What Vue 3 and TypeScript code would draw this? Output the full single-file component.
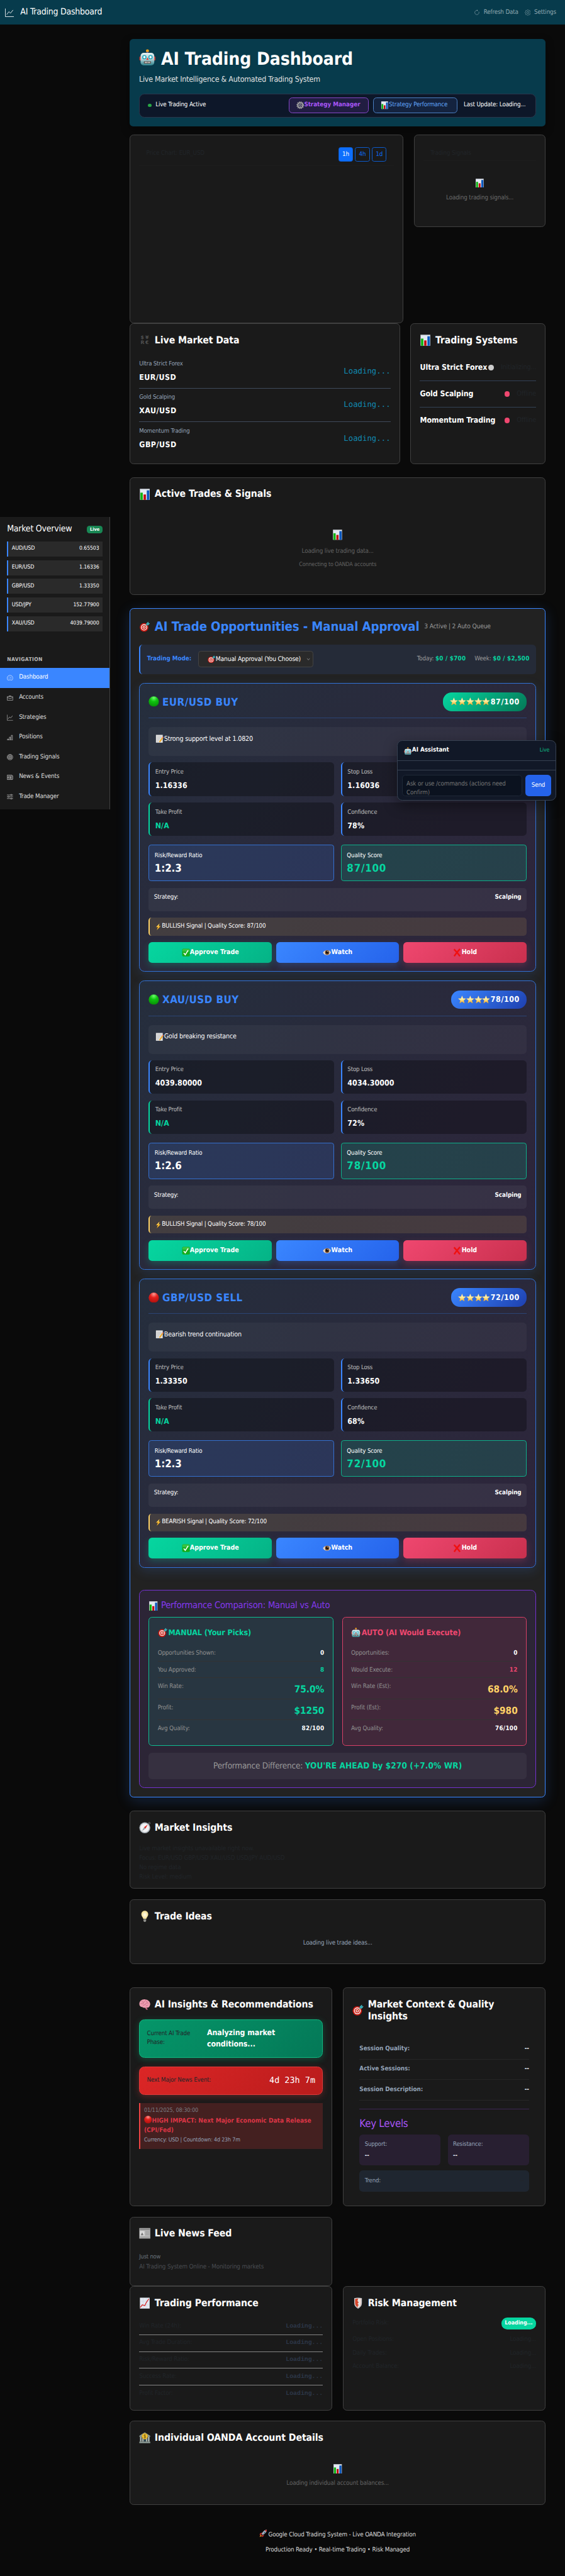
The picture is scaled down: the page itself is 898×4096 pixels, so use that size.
<script setup lang="ts">
import { h } from 'vue'

const Icon = (p: { n: string }) =>
  h('svg', { viewBox: '0 0 24 24' }, [h('use', { href: '#e-' + p.n })])

const quotes = [
  ['AUD/USD', '0.65503'],
  ['EUR/USD', '1.16336'],
  ['GBP/USD', '1.33350'],
  ['USD/JPY', '152.77900'],
  ['XAU/USD', '4039.79000'],
]

const nav = [
  ['speed', 'Dashboard'],
  ['case', 'Accounts'],
  ['graph', 'Strategies'],
  ['barchart', 'Positions'],
  ['rings', 'Trading Signals'],
  ['paper', 'News & Events'],
  ['sliders', 'Trade Manager'],
]

const markets = [
  ['Ultra Strict Forex', 'EUR/USD'],
  ['Gold Scalping', 'XAU/USD'],
  ['Momentum Trading', 'GBP/USD'],
]

const systems = [
  { name: 'Ultra Strict Forex', state: 'Initializing...', on: true },
  { name: 'Gold Scalping', state: 'Offline', on: false },
  { name: 'Momentum Trading', state: 'Offline', on: false },
]

interface Trade {
  title: string
  ball: string
  stars: number
  score: number
  top: boolean
  note: string
  entry: string
  stop: string
  confidence: string
  ratio: string
  bias: string
}

const trades: Trade[] = [
  { title: 'EUR/USD BUY', ball: 'green', stars: 5, score: 87, top: true, note: 'Strong support level at 1.0820', entry: '1.16336', stop: '1.16036', confidence: '78%', ratio: '1:2.3', bias: 'BULLISH' },
  { title: 'XAU/USD BUY', ball: 'green', stars: 4, score: 78, top: false, note: 'Gold breaking resistance', entry: '4039.80000', stop: '4034.30000', confidence: '72%', ratio: '1:2.6', bias: 'BULLISH' },
  { title: 'GBP/USD SELL', ball: 'red', stars: 4, score: 72, top: false, note: 'Bearish trend continuation', entry: '1.33350', stop: '1.33650', confidence: '68%', ratio: '1:2.3', bias: 'BEARISH' },
]

const compare = [
  {
    kind: 'manual', icon: 'target', title: 'MANUAL (Your Picks)',
    rows: [
      ['Opportunities Shown:', '0', ''],
      ['You Approved:', '8', 'good'],
      ['Win Rate:', '75.0%', 'good big'],
      ['Profit:', '$1250', 'good big'],
      ['Avg Quality:', '82/100', ''],
    ],
  },
  {
    kind: 'auto', icon: 'robot', title: 'AUTO (AI Would Execute)',
    rows: [
      ['Opportunities:', '0', ''],
      ['Would Execute:', '12', 'bad'],
      ['Win Rate (Est):', '68.0%', 'warn big'],
      ['Profit (Est):', '$980', 'warn big'],
      ['Avg Quality:', '76/100', ''],
    ],
  },
]

const sessions = ['Session Quality:', 'Active Sessions:', 'Session Description:']
const performance = ['Win Rate (24h):', 'Avg Trade Duration:', 'Risk/Reward Ratio:', 'Success Rate:', 'Profit Factor:']
const risks = ['Open Positions:', 'Daily Trades:', 'Account Balance:']
</script>

<template>
  <div class="app">
    <svg class="defs" width="0" height="0">
      <defs>
        <linearGradient id="g-teal" x1="0" y1="0" x2="0" y2="1"><stop offset="0" stop-color="#e4f1f2" /><stop offset=".55" stop-color="#a9ced3" /><stop offset="1" stop-color="#2c7f89" /></linearGradient>
        <linearGradient id="g-star" x1="0" y1="0" x2="0" y2="1"><stop offset="0" stop-color="#fffbe0" /><stop offset=".5" stop-color="#ffeb95" /><stop offset="1" stop-color="#f5a51d" /></linearGradient>
        <radialGradient id="g-green" cx=".5" cy=".15" r=".9"><stop offset="0" stop-color="#6dff6d" /><stop offset=".4" stop-color="#0fc40f" /><stop offset="1" stop-color="#068a06" /></radialGradient>
        <radialGradient id="g-red" cx=".5" cy=".15" r=".9"><stop offset="0" stop-color="#ff9a94" /><stop offset=".4" stop-color="#e5201c" /><stop offset="1" stop-color="#a50f0d" /></radialGradient>
        <radialGradient id="g-bulb" cx=".5" cy=".5" r=".6"><stop offset="0" stop-color="#fffef0" /><stop offset="1" stop-color="#eed37a" /></radialGradient>
      </defs>
      <symbol id="e-robot" viewBox="0 0 24 24">
        <circle cx="12" cy="2.6" r="2.2" fill="#f6a21c" /><rect x="11" y="4" width="2" height="3" fill="#7a4f9c" />
        <rect x=".6" y="10.5" width="3" height="6" rx="1.2" fill="#d8392f" /><rect x="20.4" y="10.5" width="3" height="6" rx="1.2" fill="#d8392f" />
        <rect x="2.2" y="5.4" width="19.6" height="18" rx="4.5" fill="url(#g-teal)" />
        <circle cx="7.6" cy="11.6" r="3.1" fill="#2aa7bd" /><circle cx="16.4" cy="11.6" r="3.1" fill="#2aa7bd" />
        <circle cx="7.6" cy="11.6" r="1.6" fill="#fff" /><circle cx="16.4" cy="11.6" r="1.6" fill="#fff" />
        <path d="M12 12l1.8 3.6h-3.6z" fill="#e03c31" /><rect x="7" y="17.6" width="10" height="3" rx=".6" fill="#4a3b35" />
        <path d="M8.2 18.2h1.4v1.8H8.2zm2.2 0h1.3v1.8h-1.3zm2.1 0h1.3v1.8h-1.3zm2.1 0h1.3v1.8h-1.3z" fill="#fff" />
      </symbol>
      <symbol id="e-bars" viewBox="0 0 24 24">
        <rect x="1.8" y=".6" width="20.4" height="22.8" fill="#e3e9f2" /><rect x="1.8" y=".6" width="20.4" height="1.2" fill="#c3c8d2" />
        <rect x="2.8" y="8.4" width="5" height="15" fill="#0fb512" /><rect x="9.4" y="12.2" width="5" height="11.2" fill="#c20d12" /><rect x="16.2" y="3.6" width="5.2" height="19.8" fill="#0b58bf" />
      </symbol>
      <symbol id="e-gear" viewBox="0 0 24 24">
        <circle cx="12" cy="12" r="10" fill="none" stroke="#9a9a9a" stroke-width="3" stroke-dasharray="2.8 2.43" />
        <circle cx="12" cy="12" r="7.6" fill="none" stroke="#a8a8a8" stroke-width="3.4" />
        <circle cx="12" cy="12" r="3" fill="none" stroke="#c4c4c4" stroke-width="1.8" />
        <path d="M12 4v5M12 15v5M4 12h5M15 12h5" stroke="#8d8d8d" stroke-width="1.4" />
      </symbol>
      <symbol id="e-target" viewBox="0 0 24 24">
        <circle cx="10.4" cy="13.6" r="9.8" fill="#c9170f" /><circle cx="10.4" cy="13.6" r="7.2" fill="#f4e9e7" /><circle cx="10.4" cy="13.6" r="5.2" fill="#d42018" /><circle cx="10.4" cy="13.6" r="3.3" fill="#f4e9e7" /><circle cx="10.4" cy="13.6" r="1.6" fill="#c9170f" />
        <path d="M10.4 13.6L17 7" stroke="#b98252" stroke-width="1.2" /><path d="M14.8 9l.8-4.4L20 .6l.6 3.2 3 .7-4 4.3z" fill="#3fb4bd" /><path d="M15 9l6-6" stroke="#1f7f8b" stroke-width="1" />
      </symbol>
      <symbol id="e-memo" viewBox="0 0 24 24">
        <rect x="1.5" y=".8" width="19.5" height="22.4" fill="#e3e3e3" /><path d="M4 5.5h14M4 9h14M4 12.5h10M4 16h7M4 19.500h5" stroke="#a9a9a9" stroke-width="1" />
        <path d="M21 6l2.6 2-9 12.600-3.600 1.800.7-4z" fill="#f2a71e" /><path d="M21 6l2.600 2-1.700 2.400-2.600-2z" fill="#e0707c" />
      </symbol>
      <symbol id="e-star" viewBox="0 0 24 24"><path d="M12 .6l3.200 7.900 8.400.6-6.500 5.400 2.100 8.300L12 18.200l-7.200 4.600 2.100-8.300L.4 9.100l8.400-.6z" fill="url(#g-star)" stroke="#eab04a" stroke-width=".5" /></symbol>
      <symbol id="e-bolt" viewBox="0 0 24 24"><path d="M16.500.5L4 13.200l6.600-.4L7 23.500 20 9.600l-6.800.5z" fill="#fdb827" /><path d="M15 2.500L7.500 11l5-1z" fill="#ffe27a" /></symbol>
      <symbol id="e-check" viewBox="0 0 24 24"><rect x="1" y="1" width="22" height="22" rx="3.500" fill="#15ad1b" /><rect x="2" y="1.500" width="20" height="8" rx="3" fill="#54d25a" opacity=".6" /><path d="M5.500 13l4.300 5.500L18 5.500" fill="none" stroke="#fff" stroke-width="2.800" /></symbol>
      <symbol id="e-eye" viewBox="0 0 24 24"><path d="M1 12C4 4.500 20 2.500 23 11.500c-1.500 9-18.500 10.500-22 .5z" fill="#eee8df" stroke="#c7a086" stroke-width="1" /><circle cx="12.500" cy="11.500" r="6.300" fill="#6d4425" /><circle cx="12.500" cy="11.500" r="3.200" fill="#0c0806" /><circle cx="14.500" cy="9" r="1.300" fill="#fff" /></symbol>
      <symbol id="e-cross" viewBox="0 0 24 24"><path d="M3 2.500c5 5 11 12 17 20M20 1.500C14 8 8 15 3.500 22.500" stroke="#f01010" stroke-width="4.400" fill="none" /></symbol>
      <symbol id="e-green" viewBox="0 0 24 24"><circle cx="12" cy="12" r="11.600" fill="url(#g-green)" /></symbol>
      <symbol id="e-red" viewBox="0 0 24 24"><circle cx="12" cy="12" r="11.600" fill="url(#g-red)" /></symbol>
      <symbol id="e-compass" viewBox="0 0 24 24"><circle cx="21.500" cy="2.800" r="1.800" fill="none" stroke="#8c9399" stroke-width="1" /><circle cx="12" cy="12.200" r="11.400" fill="#a9b2b9" /><circle cx="12" cy="12.200" r="9.300" fill="#f3f3f5" stroke="#d3d7da" stroke-width="1.200" /><path d="M18 5.500l-4.400 8.200-3.200-2.500z" fill="#e0241f" /><path d="M6 19l4.400-7.800 3.200 2.500z" fill="#9aa2a8" /></symbol>
      <symbol id="e-bulb" viewBox="0 0 24 24"><path d="M12 .4c-4.500 0-7.200 3.300-7.200 7.400 0 4.200 3.300 5.700 4 9.400h6.400c.7-3.700 4-5.200 4-9.400 0-4.100-2.700-7.400-7.200-7.400z" fill="url(#g-bulb)" /><path d="M9.200 17.800h5.600v3.400c0 1.500-1 2.400-2.800 2.400s-2.800-.9-2.800-2.400z" fill="#9d9d98" /><path d="M9.200 19.300h5.600M9.200 21h5.600" stroke="#6f6f6b" stroke-width=".6" /></symbol>
      <symbol id="e-brain" viewBox="0 0 24 24"><path d="M15 17.500l3.500 5.500h-3.500l-3-5z" fill="#c76a85" /><path d="M12.500 1.500C6 1 .8 5 .6 10.800c-.2 4.700 3 7 6 6.700 2 1.800 5 2.200 7.400.8 3 1.200 7.200.4 8.200-2.800C26 8.500 19.500 1.500 12.500 1.500z" fill="#ee9db1" /><path d="M3 11c2-2 4 1 6-1s0-4 3-5M8 15c2-3 5-1 6-4s4-2 6-1M14 16c1-2 3-1 5-3M14 3c-1 3 3 3 4 5M6 5c0 2 2 2 3 3" fill="none" stroke="#c0657f" stroke-width="1.100" /></symbol>
      <symbol id="e-news" viewBox="0 0 24 24"><rect x=".6" y="1" width="22.800" height="22" fill="#bdbdbd" /><rect x="1.600" y="2" width="20.800" height="3.600" fill="#8d8d8d" /><rect x="2" y="7.500" width="9" height="10" fill="#dcdcdc" /><path d="M3.500 16l3-6 3 6z" fill="#777" /><path d="M13 8h9M13 10.500h9M13 13h9M13 15.500h9M2 19.500h20M2 21.500h20" stroke="#858585" stroke-width=".9" /></symbol>
      <symbol id="e-up" viewBox="0 0 24 24"><rect x="1.800" y=".6" width="20.400" height="22.800" fill="#e3e9f2" /><path d="M2 8h20M2 15.500h20M8.500 1v22M15.500 1v22" stroke="#c8d1de" stroke-width=".6" /><path d="M2.500 21l4.500-5.500 5 2L15 11l5.500-8" fill="none" stroke="#d81e1e" stroke-width="1.600" /></symbol>
      <symbol id="e-shield" viewBox="0 0 24 24"><path d="M4 1.800Q12-.6 20 1.800V12q0 7.500-8 11.600Q4 19.500 4 12z" fill="#c9cdd0" /><path d="M5.800 3.300Q12 1.600 18.200 3.300V12q0 6-6.200 9.500Q5.800 18 5.800 12z" fill="#d6452b" /><path d="M12 2.400q3 0 6.200.9V12q0 6-6.200 9.500l-1.200-3 2.600-2.500-2.600-3 2.600-2.500-2.600-3z" fill="#e9e4e1" /></symbol>
      <symbol id="e-bank" viewBox="0 0 24 24"><path d="M12 .6L23.300 8v2.200H.7V8z" fill="#8d9c96" /><path d="M2 10.200h3.400v10H2zm4.600 0H10v10H6.600zm7.400 0h3.400v10H14zm4.600 0H22v10h-3.400z" fill="#a9b5b0" /><rect x="10" y="12" width="4" height="8.200" fill="#2b4550" /><rect x=".6" y="20.200" width="22.800" height="3.200" fill="#8d9c96" /><circle cx="12" cy="9" r="6" fill="#f1c232" stroke="#b98d14" stroke-width=".8" /><path d="M14.200 7C13.500 5.600 10 5.800 10 7.500s4.200 1.100 4.200 3-3.600 2.100-4.400.5M12 4.800v8.600" fill="none" stroke="#6e5410" stroke-width="1.100" /></symbol>
      <symbol id="e-rocket" viewBox="0 0 24 24"><path d="M4.500 15.500L1 23l7.500-3.500z" fill="#f7941d" /><path d="M8 9l-5.500 3L1 17l6-2zM15 16l-3 5.500-5 1.500 2-6z" fill="#c22b2b" /><path d="M23 1c-6 0-11 3.500-15.500 12.500l3 3C19.500 12 23 7 23 1z" fill="#b7bfc9" /><path d="M23 1c0 6-3.500 11-12.500 15.500l-1.200-1.200C16 11 20 7 23 1z" fill="#7c8793" /><path d="M23 1c-2.500 0-4.600.6-6.500 1.600l4.900 4.900C22.400 5.600 23 3.500 23 1z" fill="#c22b2b" /><circle cx="15.500" cy="8.500" r="2" fill="#2b5d86" /></symbol>
      <symbol id="e-speed" viewBox="0 0 24 24"><path d="M4 20.500a11 11 0 1 1 16 0q-8-2-16 0zM12 6.500v2M5.500 13h2M16.500 13h2M7.300 8.300l1.300 1.300M11 14.500l5.500-5.500" class="ln" /></symbol>
      <symbol id="e-case" viewBox="0 0 24 24"><path d="M1 6.500h22v14H1zM8.500 6.300V3.500h7v2.800M1 10.500l11 3.500 11-3.500" class="ln" /></symbol>
      <symbol id="e-graph" viewBox="0 0 24 24"><path d="M.8 1v22H24M4.500 17.500l6-8 4.200 4.200L21.800 5" class="ln" /></symbol>
      <symbol id="e-barchart" viewBox="0 0 24 24"><path d="M2 17.500h4V22H2zM9.500 10h4v12h-4zM17 3h4.500v19H17z" class="ln" /></symbol>
      <symbol id="e-rings" viewBox="0 0 24 24"><circle cx="12" cy="12" r="11" class="ln" /><circle cx="12" cy="12" r="7.800" class="ln" /><circle cx="12" cy="12" r="4.600" class="ln" /><circle cx="12" cy="12" r="1.200" class="ln" /></symbol>
      <symbol id="e-paper" viewBox="0 0 24 24"><path d="M1 3.500h18.500v17.500H1zM19.500 6.500H23V19.500q0 1.500-3.500 1.500M3.800 7.500h13M3.800 11h5.500v3H3.800zM11.500 11h5.300M11.500 14h5.300M3.800 17.500h13M14 9v9" class="ln" /></symbol>
      <symbol id="e-sliders" viewBox="0 0 24 24"><path d="M0 5h14.500M19.500 5H24M0 12h4M9 12h15M0 19h14.500M19.500 19H24" class="ln" /><circle cx="17" cy="5" r="2.500" class="ln" /><circle cx="6.500" cy="12" r="2.500" class="ln" /><circle cx="17" cy="19" r="2.500" class="ln" /></symbol>
      <symbol id="e-refresh" viewBox="0 0 24 24"><path d="M12 3.800a8.200 8.200 0 1 0 7.500 4.700" class="ln" /><path d="M12 .6v6.400l4-3.200z" fill="currentColor" /></symbol>
      <symbol id="e-cog" viewBox="0 0 24 24"><g transform="scale(1.5)"><circle cx="8" cy="8" r="2.700" class="ln thin" /><path class="ln thin" d="M9.300 1.600c-.4-1.300-2.200-1.300-2.600 0l-.1.300a1.400 1.400 0 0 1-2 .8l-.3-.1c-1.200-.7-2.500.6-1.800 1.800l.1.300a1.400 1.400 0 0 1-.8 2l-.3.100c-1.300.4-1.300 2.200 0 2.600l.3.100a1.400 1.400 0 0 1 .8 2l-.1.300c-.7 1.200.6 2.500 1.800 1.800l.3-.1a1.400 1.400 0 0 1 2 .8l.1.300c.4 1.300 2.200 1.300 2.600 0l.1-.3a1.400 1.400 0 0 1 2-.8l.3.100c1.200.7 2.500-.6 1.800-1.800l-.1-.3a1.400 1.400 0 0 1 .8-2l.3-.1c1.300-.4 1.300-2.200 0-2.600l-.3-.1a1.400 1.400 0 0 1-.8-2l.1-.3c.7-1.200-.6-2.500-1.800-1.800l-.3.100a1.400 1.400 0 0 1-2-.8z" /></g></symbol>
      <symbol id="e-caret" viewBox="0 0 24 24"><path d="M4 7l8 10 8-10" class="ln" /></symbol>
    </svg>

    <header class="navbar">
      <div class="brand"><Icon n="graph" class="brand-ic" /><span>AI Trading Dashboard</span></div>
      <div class="actions">
        <Icon n="refresh" class="s14" /><span class="a-refresh">Refresh Data</span>
        <Icon n="cog" class="s14" /><span class="a-settings">Settings</span>
      </div>
    </header>

    <div class="body">
      <aside class="sidebar">
        <div class="ov"><h6>Market Overview</h6><span class="live">Live</span></div>
        <div v-for="q in quotes" :key="q[0]" class="quote"><span>{{ q[0] }}</span><b>{{ q[1] }}</b></div>
        <div class="nav-title">NAVIGATION</div>
        <div v-for="(n, i) in nav" :key="n[1]" class="nav-item" :class="{ active: i === 0 }"><Icon :n="n[0]" class="s14" /><span>{{ n[1] }}</span></div>
      </aside>

      <main>
        <section class="hero">
          <h1><Icon n="robot" class="h1-ic" /><span>AI Trading Dashboard</span></h1>
          <p>Live Market Intelligence &amp; Automated Trading System</p>
          <div class="status">
            <i class="dot" /><span class="st-live">Live Trading Active</span>
            <span class="pill purple"><Icon n="gear" class="s18" /><b>Strategy Manager</b></span>
            <span class="pill blue"><Icon n="bars" class="s18" /><span>Strategy Performance</span></span>
            <span class="upd">Last Update: Loading...</span>
          </div>
        </section>

        <div class="row chart-row">
          <section class="card chart">
            <div class="dim-head"><span class="dim">Price Chart: EUR_USD</span>
              <div class="tf"><span class="on">1h</span><span>4h</span><span>1d</span></div>
            </div>
          </section>
          <section class="card signals">
            <div class="dim-head small"><span class="dim">Trading Signals</span></div>
            <Icon n="bars" class="s22" /><span class="muted">Loading trading signals...</span>
          </section>
        </div>

        <div class="row">
          <section class="card market">
            <h2><i class="fx"><b>$</b><b>¥</b><b>R</b><b>€</b></i>Live Market Data</h2>
            <div v-for="m in markets" :key="m[1]" class="m-row">
              <div><span class="m-lab">{{ m[0] }}</span><b class="m-val">{{ m[1] }}</b></div>
              <span class="m-load">Loading...</span>
            </div>
          </section>
          <section class="card systems">
            <h2><Icon n="bars" />Trading Systems</h2>
            <div v-for="s in systems" :key="s.name" class="s-row">
              <b>{{ s.name }}</b><span><i :class="{ on: s.on }" /><em>{{ s.state }}</em></span>
            </div>
          </section>
        </div>

        <section class="card trades">
          <h2><Icon n="bars" />Active Trades &amp; Signals</h2>
          <div class="center"><Icon n="bars" class="s24" /><span>Loading live trading data...</span><small>Connecting to OANDA accounts</small></div>
        </section>

        <section class="opps">
          <div class="opp-head"><Icon n="target" /><b>AI Trade Opportunities - Manual Approval</b><span>3 Active | 2 Auto Queue</span></div>
          <div class="mode">
            <b class="mode-lab">Trading Mode:</b>
            <div class="select"><Icon n="target" class="s18" /><span>Manual Approval (You Choose)</span><Icon n="caret" class="caret" /></div>
            <span class="limits">Today: <b>$0 / $700</b></span><span class="limits last">Week: <b>$0 / $2,500</b></span>
          </div>

          <article v-for="t in trades" :key="t.title" class="trade">
            <div class="t-head">
              <Icon :n="t.ball" class="s24" /><h3>{{ t.title }}</h3>
              <span class="badge" :class="{ top: t.top }"><Icon v-for="s in t.stars" :key="s" n="star" class="star" /><b>{{ t.score }}/100</b></span>
            </div>
            <div class="note"><Icon n="memo" class="s19" /><span>{{ t.note }}</span></div>
            <div class="metrics">
              <div><span>Entry Price</span><b>{{ t.entry }}</b></div>
              <div><span>Stop Loss</span><b>{{ t.stop }}</b></div>
              <div class="tp"><span>Take Profit</span><b>N/A</b></div>
              <div><span>Confidence</span><b>{{ t.confidence }}</b></div>
            </div>
            <div class="scores">
              <div><span>Risk/Reward Ratio</span><b>{{ t.ratio }}</b></div>
              <div class="q"><span>Quality Score</span><b>{{ t.score }}/100</b></div>
            </div>
            <div class="strategy"><span>Strategy:</span><b>Scalping</b></div>
            <div class="signal"><Icon n="bolt" class="s16" /><span>{{ t.bias }} Signal | Quality Score: {{ t.score }}/100</span></div>
            <div class="btns">
              <span class="ok"><Icon n="check" class="s19" /><b>Approve Trade</b></span>
              <span class="watch"><Icon n="eye" class="s19" /><b>Watch</b></span>
              <span class="hold"><Icon n="cross" class="s19" /><b>Hold</b></span>
            </div>
          </article>

          <div class="perf">
            <h4><Icon n="bars" class="s22" />Performance Comparison: Manual vs Auto</h4>
            <div class="cmp">
              <div v-for="c in compare" :key="c.kind" :class="c.kind">
                <h5><Icon :n="c.icon" class="s22" />{{ c.title }}</h5>
                <div v-for="r in c.rows" :key="r[0]" class="c-row" :class="r[2]"><span>{{ r[0] }}</span><b>{{ r[1] }}</b></div>
              </div>
            </div>
            <div class="diff"><span>Performance Difference: </span><b>YOU'RE AHEAD by $270 (+7.0% WR)</b></div>
          </div>
        </section>

        <section class="card insights">
          <h2><Icon n="compass" />Market Insights</h2>
          <p class="dim">Live market insights unavailable right now.</p>
          <p class="dim">Focus: EUR/USD GBP/USD XAU/USD USD/JPY AUD/USD</p>
          <p class="dim">No regime data</p>
          <p class="dim">Risk Level: medium</p>
        </section>

        <section class="card ideas"><h2><Icon n="bulb" />Trade Ideas</h2><p>Loading live trade ideas...</p></section>

        <div class="row halves ai-row">
          <section class="card ai">
            <h2><Icon n="brain" />AI Insights &amp; Recommendations</h2>
            <div class="phase"><span>Current AI Trade Phase:</span><b>Analyzing market conditions...</b></div>
            <div class="next"><span>Next Major News Event:</span><b>4d 23h 7m</b></div>
            <div class="event">
              <small>01/11/2025, 08:30:00</small>
              <b><Icon n="red" class="s18" />HIGH IMPACT: Next Major Economic Data Release<br>(CPI/Fed)</b>
              <span>Currency: USD | Countdown: 4d 23h 7m</span>
            </div>
          </section>
          <section class="card ctx">
            <h2 class="two"><Icon n="target" /><span>Market Context &amp; Quality<br>Insights</span></h2>
            <div class="ctx-in">
              <div v-for="s in sessions" :key="s" class="x-row"><b>{{ s }}</b><b class="w">--</b></div>
              <h4>Key Levels</h4>
              <div class="lv"><div><span>Support:</span><b>--</b></div><div><span>Resistance:</span><b>--</b></div></div>
              <div class="trend"><span>Trend:</span><em>--</em></div>
            </div>
          </section>
        </div>

        <section class="card feed"><h2><Icon n="news" />Live News Feed</h2><small>Just now</small><p>AI Trading System Online - Monitoring markets</p></section>

        <div class="row halves">
          <section class="card stats">
            <h2><Icon n="up" />Trading Performance</h2>
            <div v-for="p in performance" :key="p" class="p-row"><span>{{ p }}</span><b>Loading...</b></div>
          </section>
          <section class="card risk">
            <h2><Icon n="shield" />Risk Management</h2>
            <div class="r-row first"><span>Portfolio Risk:</span><b>Loading...</b></div>
            <div v-for="r in risks" :key="r" class="r-row"><span>{{ r }}</span><span>Loading...</span></div>
          </section>
        </div>

        <section class="card accounts">
          <h2><Icon n="bank" />Individual OANDA Account Details</h2>
          <div class="center"><Icon n="bars" class="s22" /><span>Loading individual account balances...</span></div>
        </section>

        <footer>
          <p><Icon n="rocket" class="s18" />Google Cloud Trading System - Live OANDA Integration</p>
          <p>Production Ready • Real-time Trading • Risk Managed</p>
        </footer>
      </main>
    </div>

    <div class="assistant">
      <div class="as-head"><Icon n="robot" class="s18" /><b>AI Assistant</b><span>Live</span></div>
      <div class="as-log" />
      <div class="as-form"><div class="as-in">Ask or use /commands (actions need Confirm)</div><span class="send">Send</span></div>
    </div>
  </div>
</template>

<style>
body { background: #0a0a0a; }
.ln { fill: none; stroke: currentColor; stroke-width: 1.5; }
.ln.thin { stroke-width: 1; }
</style>

<style scoped>
.app { --ls: -.017; zoom: 0.7015625; position: relative; width: 1280px; height: 5838px; overflow: hidden; background: #0a0a0a; color: #fff; font-family: "DejaVu Sans Condensed", "DejaVu Sans", sans-serif; font-stretch: condensed; font-size: 14px; line-height: 21px; text-rendering: geometricPrecision; }
.app * { box-sizing: border-box; letter-spacing: calc(var(--ls) * 1em); }
.app svg { flex: none; }
h1, h2, h3, h5, b { --ls: -.005; }
h1, h2, h3, h4, h5, h6, p { margin: 0; }
.defs { position: absolute; }
span, b { white-space: nowrap; }
.s14 { width: 14px; height: 14px; }
.s16 { width: 16px; height: 16px; }
.s18 { width: 18px; height: 18px; }
.s19 { width: 19px; height: 19px; }
.s22 { width: 22px; height: 22px; }
.s24 { width: 24px; height: 24px; }
.dim { color: #212529; }

.navbar { height: 56px; background: #073b4c; display: flex; justify-content: space-between; align-items: center; padding: 0 20px 0 12px; }
.brand { display: flex; align-items: center; gap: 14px; font-size: 20px; }
.brand-ic { width: 20px; height: 20px; }
.actions { display: flex; align-items: center; color: #8fa8b0; padding-top: 2px; }
.a-refresh { margin: 0 14px 0 8px; }
.a-settings { margin-left: 8px; }

.body { display: grid; grid-template-columns: 250px 942px; column-gap: 44px; align-items: start; }

.sidebar { margin-top: 1115px; height: 664px; background: #1a1a1a; border-right: 1px solid #404040; padding: 18px 16px 0; }
.ov { display: flex; justify-content: space-between; align-items: center; height: 22px; margin-bottom: 16px; }
.ov h6 { font-size: 20px; font-weight: 400; }
.live { --ls: 0; background: #198754; border-radius: 6px; font-size: 10.5px; font-weight: 700; line-height: 18px; padding: 0 7px; }
.quote { height: 34.400px; margin-bottom: 8px; background: #2a2a2a; border-left: 3px solid #3a86ff; padding: 0 8px; display: flex; justify-content: space-between; align-items: center; font-size: 12.800px; }
.quote b { font-weight: 400; font-size: 12.200px; }
.nav-title { --ls: .05; font-size: 12px; font-weight: 700; color: #bbb; margin-top: 47px; height: 28px; line-height: 34px; }
.nav-item { height: 45px; margin: 0 -16px; padding: 0 16px; display: flex; align-items: center; gap: 13px; color: #ddd; }
.nav-item.active { background: #3a86ff; color: #fff; }
.nav-title + .nav-item { margin-top: 8px; }

main { padding-top: 32px; width: 942px; }
.hero { height: 198px; margin-bottom: 19px; padding: 0 21px; background: #073b4c; border-radius: 8px; box-shadow: 0 8px 20px rgba(0, 0, 0, .4); }
.hero h1 { height: 79px; padding-top: 13px; display: flex; align-items: center; gap: 12px; font-size: 40px; line-height: 50px; }
.h1-ic { width: 38px; height: 38px; margin-bottom: 8px; }
.hero p { height: 45px; line-height: 26px; font-size: 17.600px; color: #e0e0e0; }
.status { display: flex; align-items: center; height: 54px; border-radius: 12px; background: #0d1729; border: 1px solid #2a364c; padding: 0 19px; white-space: nowrap; }
.dot { width: 8px; height: 8px; border-radius: 50%; background: #28a745; margin-right: 9px; }
.st-live { flex: 1; }
.pill { display: flex; align-items: center; height: 36px; border-radius: 8px; border: 1px solid; padding: 0 16px; }
.pill.purple { width: 182px; color: #a855f7; background: #211d42; margin-right: 10px; border-color: #8546c8; }
.pill.blue { width: 190px; color: #60a5fa; background: #14233f; margin-right: 15px; border-color: #4a80c4; }
.upd { width: 144px; }

.card { background: #1a1a1a; border: 1px solid #404040; border-radius: 9px; padding: 22px 20px 0; }
.row { display: flex; justify-content: space-between; align-items: flex-start; }
h2 { display: flex; align-items: center; gap: 9px; height: 30px; font-size: 22.400px; line-height: 27px; white-space: nowrap; }
h2 svg { width: 26px; height: 26px; }
.chart-row { height: 428px; }
.chart { width: 620px; height: 428px; }
.signals { width: 298px; height: 210px; display: flex; flex-direction: column; align-items: center; }
.dim-head { display: flex; justify-content: space-between; width: 100%; height: 48px; padding: 7px 17px 0 16px; border-bottom: 1px solid #1e1e1e; }
.dim-head span { line-height: 26px; }
.dim-head.small { height: 37px; padding-top: 6px; flex: none; }
.tf { display: flex; gap: 5px; margin-top: -2px; }
.tf span { width: 33px; height: 33px; line-height: 32px; border: 1px solid #0d5ccd; border-radius: 5px; color: #0d6efd; text-align: center; }
.tf .on { background: #0d6efd; color: #fff; }
.signals .s22 { margin: 39px 0 13px; width: 21px; height: 21px; }
.muted { color: #6b6b6b; }

.market { width: 612px; height: 319px; }
.fx { display: grid; grid-template-columns: 11px 11px; width: 26px; height: 24px; padding-left: 3px; color: #505050; font: 700 11px/12px "DejaVu Sans", sans-serif; }
.m-row { height: 76px; display: flex; justify-content: space-between; align-items: center; border-bottom: 1px solid #3f4a5b; }
.market h2, .systems h2 { margin-bottom: 18px; }
.m-row:last-child, .s-row:last-child { border: 0; }
.m-lab { display: block; font-size: 13.600px; color: #94a3b8; line-height: 21px; }
.m-val { --ls: .04; display: block; font-size: 17.600px; line-height: 26px; margin-top: 6px; }
.m-load { --ls: 0; font-family: "DejaVu Sans Mono", monospace; font-size: 17.600px; color: #118ab2; }
.systems { width: 306px; height: 319px; }
.s-row { height: 59.500px; display: flex; justify-content: space-between; align-items: center; border-bottom: 1px solid #334155; font-size: 17.600px; }
.s-row span { display: flex; align-items: center; }
.s-row i { width: 12px; height: 12px; border-radius: 50%; background: #ef476f; margin-right: 16px; }
.s-row i.on { background: #ccc; }
.s-row em { font-style: normal; font-size: 15.400px; color: #212529; }

.trades { height: 267px; margin-top: 29.500px; }
.center { display: flex; flex-direction: column; align-items: center; color: #626262; }
.trades .center { padding-top: 65px; }
.trades .center span { margin-top: 16px; }
.trades small { font-size: 12.800px; margin-top: 9px; }

.opps { margin-top: 30.500px; height: 2695px; border: 2px solid #3a86ff; border-radius: 9px; background: #222; padding: 0 20px; box-shadow: 0 8px 32px rgba(58, 134, 255, .2); }
.opp-head { display: flex; align-items: center; height: 80px; }
.opp-head svg { width: 26px; height: 24px; }
.opp-head b { font-size: 28.800px; color: #3a86ff; margin: 0 11px 0 9px; }
.opp-head span { font-size: 14.600px; color: #999; }
.mode { height: 67px; margin-bottom: 20.500px; background: #252b38; border-left: 4px solid #3a86ff; border-radius: 8px; display: flex; align-items: center; padding: 0 15px; }
.mode-lab { color: #3a86ff; width: 116px; }
.select { width: 260px; height: 37px; border: 1px solid #444; border-radius: 6px; background: #2a2a2a; display: flex; align-items: center; padding: 0 4px 0 20px; margin-right: auto; font-size: 14.600px; }
.select span { flex: 1; }
.caret { width: 9px; height: 9px; }
.limits { color: #999; }
.limits.last { margin-left: 20px; }
.limits b { --ls: .024; color: #06d6a0; }

.trade { height: 655px; margin-bottom: 20px; border: 1px solid #3272d6; border-radius: 12px; padding: 20px; background: linear-gradient(135deg, rgba(58, 134, 255, .12), rgba(131, 56, 236, .12)); box-shadow: 0 8px 24px rgba(58, 134, 255, .15); }
.t-head { display: flex; align-items: center; height: 59px; padding-bottom: 15px; border-bottom: 2px solid #2b4474; }
.t-head h3 { --ls: .027; font-size: 24px; color: #3a86ff; margin-left: 7px; flex: 1; }
.badge { height: 42px; border-radius: 20px; display: flex; align-items: center; padding: 0 16px; background: linear-gradient(135deg, #3a86ff, #1e40af); font-size: 17.600px; }
.badge.top { background: linear-gradient(135deg, #06d6a0, #047857); }
.star { width: 18.200px; height: 18.200px; }
.badge b { --ls: .045; margin-left: 1px; }
.note { height: 65px; margin-top: 20px; border-radius: 8px; background: rgba(255, 255, 255, .04); padding: 15px 15px 0; display: flex; font-size: 15.200px; line-height: 23px; }
.note svg { margin: 2px 1px 0 0; }
.metrics { display: grid; grid-template-columns: 1fr 1fr; grid-auto-rows: 75.800px; gap: 15px; margin-top: 15px; }
.metrics div { background: rgba(0, 0, 0, .3); border-left: 3px solid #3a86ff; border-radius: 8px; padding: 12px; }
.metrics .tp { border-color: #06d6a0; }
.metrics span { display: block; font-size: 13.700px; line-height: 20px; color: #bdbdbd; }
.metrics b { --ls: .005; display: block; font-size: 17.600px; line-height: 26px; margin-top: 7px; }
.metrics .tp b, .scores .q b { color: #06d6a0; }
.scores { display: grid; grid-template-columns: 1fr 1fr; gap: 15px; margin-top: 19.500px; }
.scores div { height: 83px; border: 1px solid #3470cf; border-radius: 6px; background: rgba(58, 134, 255, .15); padding: 14px 12px; }
.scores .q { border-color: #0eaf8a; background: rgba(6, 214, 160, .15); }
.scores span { display: block; font-size: 13.800px; line-height: 20px; }
.scores b { display: block; font-size: 24px; line-height: 36px; }
.scores .q b { --ls: .045; }
.strategy { height: 53px; margin-top: 15px; border-radius: 7px; background: rgba(255, 255, 255, .05); padding: 12px 12px 0; display: flex; justify-content: space-between; }
.signal { height: 40.500px; margin-top: 15px; border-left: 3px solid #ffd166; border-radius: 7px; background: rgba(255, 209, 102, .12); display: flex; align-items: center; padding-left: 11px; }
.btns { display: grid; grid-template-columns: repeat(3, 1fr); gap: 10px; margin-top: 15px; }
.btns > span { height: 46.500px; border-radius: 8px; display: flex; align-items: center; justify-content: center; font-size: 15.200px; }
.ok { background: linear-gradient(135deg, #06d6a0, #05b386); box-shadow: 0 6px 15px rgba(6, 214, 160, .25); }
.watch { background: linear-gradient(135deg, #3a86ff, #2563eb); box-shadow: 0 6px 15px rgba(58, 134, 255, .25); }
.hold { background: linear-gradient(135deg, #ef476f, #c9304e); box-shadow: 0 6px 15px rgba(239, 71, 111, .25); }

.perf { height: 448.500px; margin-top: 50.500px; border: 1px solid #7432d0; border-radius: 12px; background: #2c2536; padding: 20px; }
.perf h4 { display: flex; align-items: center; gap: 6px; height: 30px; font-size: 21px; font-weight: 400; color: #8338ec; }
.cmp { display: grid; grid-template-columns: 1fr 1fr; gap: 20px; margin-top: 10px; }
.cmp > div { height: 292.500px; border: 1px solid #0fbf92; border-radius: 8px; padding: 19px; background: #283641; }
.cmp > .auto { border-color: #d84066; background: #41283a; }
.cmp h5 { display: flex; align-items: center; gap: 2px; height: 30px; margin-bottom: 12px; font-size: 17.800px; color: #06d6a0; }
.cmp .auto h5 { color: #ef476f; }
.c-row { display: flex; justify-content: space-between; height: 38.200px; padding-top: 10px; border-bottom: 1px solid #333; color: #909090; }
.c-row:last-child { border: 0; }
.c-row b { --ls: .03; color: #fff; }
.c-row.big { height: 47.700px; }
.c-row.big b { --ls: 0; font-size: 21.800px; line-height: 32px; }
.c-row.good b { color: #06d6a0; }
.c-row.bad b { color: #ef476f; }
.c-row.warn b { color: #ffd166; }
.diff { height: 60px; line-height: 60px; margin-top: 15px; border-radius: 8px; background: rgba(255, 255, 255, .05); text-align: center; font-size: 19.200px; color: #999; }
.diff b { --ls: .009; color: #06d6a0; }

.insights { height: 177px; margin-top: 30px; }
.insights h2 { margin-bottom: 24px; }
.insights p { height: 21px; }
.ideas { height: 146px; margin-top: 24px; }
.ideas p { text-align: center; color: #94a3b8; padding-top: 36px; }

.halves > .card { width: 459px; }
.ai-row { margin-top: 54px; }
.ai-row > .card { height: 495px; }
.phase, .next { border-radius: 12px; border: 1px solid #10b981; display: flex; align-items: center; padding: 0 16px; color: #212529; }
.phase { height: 88px; margin-top: 18px; background: linear-gradient(135deg, #059669, #047857); box-shadow: 0 4px 15px rgba(16, 185, 129, .3); }
.phase span { white-space: normal; width: 136px; padding-right: 20px; }
.phase b { color: #fff; font-size: 17.600px; line-height: 26.400px; width: 220px; white-space: normal; }
.next { height: 64px; margin-top: 19px; justify-content: space-between; border-color: #e33a3a; background: linear-gradient(135deg, #dc2626, #b91c1c); box-shadow: 0 4px 15px rgba(239, 68, 68, .3); }
.next b { --ls: 0; color: #fff; font: 400 19.200px "DejaVu Sans Mono", monospace; }
.event { height: 105px; margin-top: 19px; border-left: 3px solid #ef4444; background: #442020; padding: 8px; }
.event > * { display: block; }
.event small { font-size: 13px; color: #7a7d82; line-height: 21px; }
.event b { --ls: .003; color: #dc3545; font-size: 14.400px; line-height: 22.500px; }
.event b svg { vertical-align: -3px; }
.event span { font-size: 12.600px; color: #94a3b8; line-height: 22px; }
.two { height: 54px; margin-top: 1px; }
.two span { --ls: -.005; line-height: 27px; }
.hero h1 span { --ls: -.003; }
.ctx-in { padding: 39px 16px 0; }
.x-row { height: 46px; display: flex; justify-content: space-between; align-items: center; border-bottom: 2px solid #262626; color: #94a3b8; }
.x-row .w, .lv b { color: #e8edf5; }
.ctx h4 { margin-top: 19px; border-top: 2px solid #3d2756; padding-top: 16px; height: 58px; font-size: 24px; line-height: 33px; font-weight: 400; color: #a855f7; }
.lv { display: grid; grid-template-columns: 1fr 1fr; gap: 16px; }
.lv div, .trend { background: #281f31; border-radius: 8px; padding: 14px 12px; height: 71px; color: #94a3b8; font-size: 13.600px; }
.lv span, .lv b { display: block; line-height: 20px; }
.lv b { margin-top: 5px; }
.trend { margin-top: 11px; height: 49px; background: #1f2630; display: flex; justify-content: space-between; }
.trend em { font-style: normal; color: #212529; }

.feed { width: 459px; height: 158px; margin-top: 24px; }
.feed small { display: block; font-size: 13.200px; color: #6c757d; margin-top: 28px; height: 24px; }
.feed p { color: #494c51; }
.stats, .risk { height: 281px; }
.stats h2 { margin-bottom: 19px; }
.p-row { height: 38.100px; display: flex; justify-content: space-between; align-items: center; border-bottom: 2px solid #858585; color: #212529; }
.p-row:last-child { border: 0; }
.p-row b { --ls: 0; font-family: "Liberation Mono", monospace; color: #2d3748; }
.risk h2 { margin-bottom: 18px; }
.r-row { display: flex; justify-content: space-between; color: #212529; height: 31px; align-items: center; }
.r-row.first { height: 27px; margin-bottom: 7px; }
.first span { margin-top: -3px; }
.first b { background: #06d6a0; color: #fff; border-radius: 13px; line-height: 27px; width: 79px; text-align: center; font-size: 12.600px; }
.accounts { height: 191px; margin-top: 24px; }
.accounts .center { padding-top: 44px; }
.accounts .center span { margin-top: 13px; }
footer { padding-top: 55.500px; text-align: center; color: #d8d8d8; }
footer p { height: 37px; }
footer svg { vertical-align: -3px; margin-right: 2px; }

.assistant { position: absolute; left: 900px; top: 1678px; width: 360px; height: 137px; border: 1px solid #374151; border-radius: 12px; background: #111827; overflow: hidden; box-shadow: 0 10px 30px rgba(0, 0, 0, .4); }
.as-head { display: flex; align-items: center; height: 46px; padding: 0 14px; border-bottom: 1px solid #374151; }
.as-head b { flex: 1; }
.as-head span { font-size: 12.400px; color: #10b981; }
.as-log { height: 21px; border-bottom: 1px solid #374151; }
.as-form { display: flex; gap: 8px; padding: 10px; }
.as-in { width: 271px; height: 48px; border: 1px solid #1f2937; border-radius: 8px; background: #0b121f; color: #757575; padding: 9px 8px 0; overflow: hidden; }
.send { width: 58px; height: 48px; line-height: 49px; border-radius: 8px; background: #2563eb; text-align: center; }
</style>
